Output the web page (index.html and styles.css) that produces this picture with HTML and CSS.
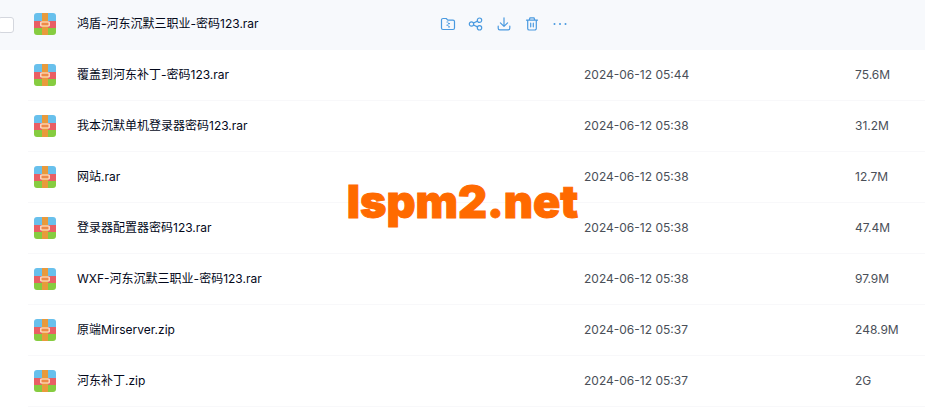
FILE: index.html
```html
<!DOCTYPE html>
<html lang="zh-CN">
<head>
    <meta charset="UTF-8">
    <meta name="viewport" content="width=device-width, initial-scale=1.0">
    <title>lspm2.net</title>
    <link rel="stylesheet" href="styles.css">
</head>
<body>
    <svg class="sprite" aria-hidden="true">
        <symbol id="archive" viewBox="0 0 22 22">
            <rect width="22" height="8" fill="#68c0ec"/>
            <rect y="8" width="22" height="7" fill="#e95f64"/>
            <rect y="15" width="22" height="7" fill="#86cc40"/>
            <rect x="8" width="6" height="22" fill="#e89a3c"/>
            <rect x="6.8" y="9" width="8.4" height="4" rx="0.5" fill="#ee8a48" stroke="#ffeeda" stroke-width="1.2"/>
        </symbol>
    </svg>

    <main class="file-list">
        <table>
            <colgroup>
                <col class="col-check">
                <col class="col-icon">
                <col>
                <col class="col-date">
                <col class="col-size">
            </colgroup>
            <tbody>
                <tr class="active">
                    <td class="check"><input type="checkbox" aria-label="鸿盾-河东沉默三职业-密码123.rar"></td>
                    <td class="icon"><svg><use href="#archive"/></svg></td>
                    <td class="name">
                        <div class="name-row">
                            <a href="#">鸿盾-河东沉默三职业-密码123.rar</a>
                            <div class="actions">
                                <button aria-label="解压">
                                    <svg viewBox="0 0 16 16"><path d="M3 2.500h3.200l1.600 1.600H13a1.500 1.500 0 0 1 1.500 1.500v6.400a1.500 1.500 0 0 1-1.500 1.500H3A1.500 1.500 0 0 1 1.500 12V4A1.500 1.500 0 0 1 3 2.500z"/><path d="M7 6h1M8.500 7.600h1M7 9.200h1M8.500 10.800h1"/></svg>
                                </button>
                                <button aria-label="分享">
                                    <svg viewBox="0 0 16 16"><circle cx="3.500" cy="8" r="2.200"/><circle cx="11.500" cy="4.200" r="2.200"/><circle cx="11.500" cy="11.800" r="2.200"/><path d="M5.500 7l4-1.900M5.500 9l4 1.900"/></svg>
                                </button>
                                <button aria-label="下载">
                                    <svg viewBox="0 0 16 16"><path d="M8 1.800v8.400M4.400 6.800L8 10.400l3.600-3.600M2.200 10v2.200a1.600 1.600 0 0 0 1.600 1.600h8.400a1.600 1.600 0 0 0 1.600-1.600V10"/></svg>
                                </button>
                                <button aria-label="删除">
                                    <svg viewBox="0 0 16 16"><path d="M2.500 4.200h11M5.200 4.200L6 1.800h4l.8 2.400M3.700 4.200v8.200a1.600 1.600 0 0 0 1.600 1.600h5.400a1.600 1.600 0 0 0 1.600-1.600V4.200M6.700 7.200v3.600M9.300 7.200v3.600"/></svg>
                                </button>
                                <button aria-label="更多">
                                    <svg viewBox="0 0 16 16"><path class="dots" d="M2.500 8h.01M8 8h.01M13.500 8h.01"/></svg>
                                </button>
                            </div>
                        </div>
                    </td>
                    <td class="date"></td>
                    <td class="size"></td>
                </tr>
                <tr>
                    <td class="check"></td>
                    <td class="icon"><svg><use href="#archive"/></svg></td>
                    <td class="name"><a href="#">覆盖到河东补丁-密码123.rar</a></td>
                    <td class="date">2024-06-12 05:44</td>
                    <td class="size">75.6M</td>
                </tr>
                <tr>
                    <td class="check"></td>
                    <td class="icon"><svg><use href="#archive"/></svg></td>
                    <td class="name"><a href="#">我本沉默单机登录器密码123.rar</a></td>
                    <td class="date">2024-06-12 05:38</td>
                    <td class="size">31.2M</td>
                </tr>
                <tr>
                    <td class="check"></td>
                    <td class="icon"><svg><use href="#archive"/></svg></td>
                    <td class="name"><a href="#">网站.rar</a></td>
                    <td class="date">2024-06-12 05:38</td>
                    <td class="size">12.7M</td>
                </tr>
                <tr>
                    <td class="check"></td>
                    <td class="icon"><svg><use href="#archive"/></svg></td>
                    <td class="name"><a href="#">登录器配置器密码123.rar</a></td>
                    <td class="date">2024-06-12 05:38</td>
                    <td class="size">47.4M</td>
                </tr>
                <tr>
                    <td class="check"></td>
                    <td class="icon"><svg><use href="#archive"/></svg></td>
                    <td class="name"><a href="#">WXF-河东沉默三职业-密码123.rar</a></td>
                    <td class="date">2024-06-12 05:38</td>
                    <td class="size">97.9M</td>
                </tr>
                <tr>
                    <td class="check"></td>
                    <td class="icon"><svg><use href="#archive"/></svg></td>
                    <td class="name"><a href="#">原端Mirserver.zip</a></td>
                    <td class="date">2024-06-12 05:37</td>
                    <td class="size">248.9M</td>
                </tr>
                <tr>
                    <td class="check"></td>
                    <td class="icon"><svg><use href="#archive"/></svg></td>
                    <td class="name"><a href="#">河东补丁.zip</a></td>
                    <td class="date">2024-06-12 05:37</td>
                    <td class="size">2G</td>
                </tr>
            </tbody>
        </table>
        <div class="watermark">lspm2.net</div>
    </main>
</body>
</html>
```

FILE: styles.css
```css
* {
    margin: 0;
    padding: 0;
    box-sizing: border-box;
}

body {
    background: #fff;
    color: #03081a;
    font-family: Inter, "Noto Sans CJK SC", sans-serif;
    font-size: 12px;
    line-height: 18px;
    overflow-x: hidden;
}

.sprite {
    display: none;
}

.file-list {
    position: relative;
}

table {
    width: 100%;
    table-layout: fixed;
    border-collapse: separate;
    border-spacing: 0;
}

.col-check {
    width: 28px;
}

.col-icon {
    width: 49px;
}

.col-date {
    width: 271px;
}

.col-size {
    width: 70px;
}

td {
    height: 51px;
    border-bottom: 1px solid #f8f8fa;
    vertical-align: middle;
    white-space: nowrap;
}

.check {
    border-bottom: none;
}

.icon {
    padding-left: 6px;
}

.icon svg {
    display: block;
    width: 22px;
    height: 22px;
    border-radius: 3px;
}

.date,
.size {
    color: #4a4f58;
}

.active td {
    height: 50px;
    padding-bottom: 1px;
    background: #f7f9fc;
    border-bottom-color: #f7f9fc;
}

.check input {
    display: block;
    appearance: none;
    width: 16px;
    height: 16px;
    margin-left: -2px;
    background: #fff;
    border: 1px solid #d4d7de;
    border-radius: 3px;
}

a {
    color: inherit;
    text-decoration: none;
}

.name-row {
    display: flex;
    align-items: center;
    justify-content: space-between;
    padding-right: 16px;
}

.actions {
    display: flex;
    gap: 12px;
}

button {
    width: 16px;
    height: 16px;
    background: none;
    border: none;
    cursor: pointer;
}

button svg {
    display: block;
    width: 16px;
    height: 16px;
    fill: none;
    stroke: #4a9ae0;
    stroke-width: 1.2;
    stroke-linecap: round;
    stroke-linejoin: round;
}

button .dots {
    stroke-width: 2;
}

/* site name laid over the list */
.watermark {
    position: absolute;
    top: 178px;
    left: 50%;
    transform: translateX(-50%);
    color: #ff6a00;
    font-size: 45px;
    font-weight: 900;
    line-height: 48px;
    -webkit-text-stroke: 1px #ff6a00;
    pointer-events: none;
}
```
